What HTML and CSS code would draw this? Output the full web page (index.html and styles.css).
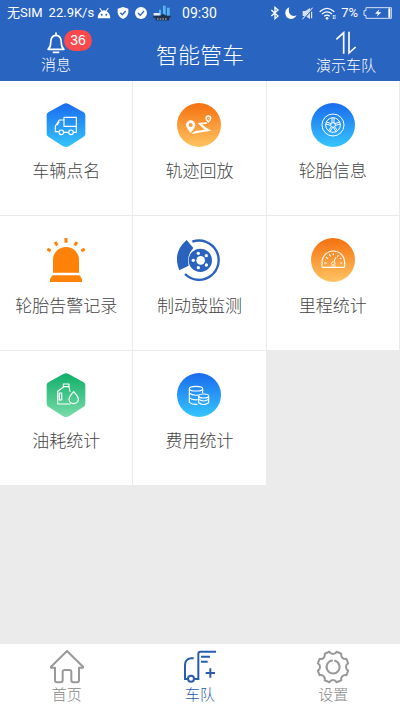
FILE: index.html
```html
<!DOCTYPE html>
<html lang="zh-CN">

<head>
  <meta charset="UTF-8">
  <meta name="viewport" content="width=device-width, initial-scale=1.0">
  <title>智能管车</title>
  <link rel="stylesheet" href="styles.css">
</head>

<body>
  <div class="status">
    <div class="status_left">
      <span>无SIM</span>
      <span>22.9K/s</span>
      <svg class="android" width="14" height="12" viewBox="0 0 42 36">
        <path d="M2 34Q3 19 13 13L7 4L9 2L16 11Q21 9 26 11L33 2L35 4L29 13Q39 19 40 34Z" fill="#fff" />
        <circle cx="14" cy="23" r="3" fill="#2a64c1" /><circle cx="28" cy="23" r="3" fill="#2a64c1" />
      </svg>
      <svg width="12" height="12" viewBox="0 0 36 36">
        <path d="M18 0L34 5V16Q34 29 18 36Q2 29 2 16V5Z" fill="#fff" />
        <path d="M10 17L16 23L26 12" fill="none" stroke="#2a64c1" stroke-width="4" />
      </svg>
      <svg width="12" height="12" viewBox="0 0 36 36">
        <circle cx="18" cy="18" r="18" fill="#fff" />
        <path d="M9 18L16 25L27 12" fill="none" stroke="#2a64c1" stroke-width="4" />
      </svg>
      <svg width="18" height="16" viewBox="0 0 54 48">
        <path d="M18 32V14H24V32M30 32V2H38V32M42 32V8H50V32" fill="#57b4ee" />
        <path d="M2 24H20V32H2Z" fill="#e8edf2" />
        <path d="M1 32H22L30 26L40 32H53V38H1Z" fill="#1f3048" />
        <path d="M8 38H48V46H8Z" fill="#202a3c" />
        <path d="M12 42H44" stroke="#c9d3df" stroke-width="3" stroke-dasharray="5 3" />
      </svg>
    </div>
    <time>09:30</time>
    <div class="status_right">
      <svg width="10" height="14" viewBox="0 0 30 42">
        <path d="M4 12L24 30L15 38V4L24 12L4 30" fill="none" stroke="#fff" stroke-width="4" />
      </svg>
      <svg width="12" height="12" viewBox="0 0 36 36">
        <path d="M13 1Q8 18 19 25Q26 29 35 25Q29 36 17 36Q1 34 1 18Q1 6 13 1Z" fill="#fff" />
      </svg>
      <svg class="mute" width="12" height="13" viewBox="0 0 36 39">
        <path d="M2 12H10L24 3V36L10 27H2Z" fill="#d5e2f5" />
        <path d="M34 2L3 37" stroke="#2a64c1" stroke-width="5" />
        <path d="M32 2L1 37M29 14V34" stroke="#fff" stroke-width="3" />
      </svg>
      <svg width="17" height="13" viewBox="0 0 51 39">
        <path d="M2 14Q24-6 46 14M9 21Q24 8 39 21M16 28Q24 21 32 28" fill="none" stroke="#fff" stroke-width="4" />
        <circle cx="24" cy="34" r="4" fill="#fff" />
        <path d="M43 24V36M48 24V36" stroke="#fff" stroke-width="3" stroke-dasharray="5 2" />
      </svg>
      <span>7%</span>
      <svg width="29" height="12" viewBox="0 0 87 36">
        <path d="M9 2H85V34H9V25H3V11H9Z" fill="none" stroke="#d5e2f5" stroke-width="3" />
        <path d="M79 4V32" stroke="#fff" stroke-width="6" />
        <path d="M49 7L36 20H45L41 29L55 16H46Z" fill="#fff" />
      </svg>
    </div>
  </div>

  <header class="header">
    <button type="button" class="message">
      <span class="bell">
        <svg width="20" height="22" viewBox="0 0 60 66">
          <path d="M6 52Q14 46 14 33Q14 10 30 10Q46 10 46 33Q46 46 54 52Z M30 10V3M22 61H38" fill="none" stroke="#fff" stroke-width="5" stroke-linecap="round" stroke-linejoin="round" />
        </svg>
        <span class="badge">36</span>
      </span>
      消息
    </button>
    <h1>智能管车</h1>
    <button type="button" class="fleet">
      <svg width="22" height="24" viewBox="0 0 66 72">
        <path d="M4 25L26 5V68M42 2V66L62 48" fill="none" stroke="#fff" stroke-width="5" />
      </svg>
      演示车队
    </button>
  </header>

  <main class="menu">
    <svg class="defs" width="0" height="0">
      <defs>
        <linearGradient id="blue" x1="0" y1="0" x2="0" y2="1">
          <stop offset="0" stop-color="#1a6bed" /><stop offset="1" stop-color="#35c5fd" />
        </linearGradient>
        <linearGradient id="orange" x1="0" y1="0" x2="0" y2="1">
          <stop offset="0" stop-color="#f5700f" /><stop offset="1" stop-color="#ffc462" />
        </linearGradient>
        <linearGradient id="green" x1="0" y1="0" x2="0" y2="1">
          <stop offset="0" stop-color="#0fae69" /><stop offset="1" stop-color="#78dca9" />
        </linearGradient>
      </defs>
    </svg>

    <a class="item" href="#">
      <svg class="icon" viewBox="0 0 132 132">
        <path d="M58 3Q66-2 74 3L119 28Q124 31 124 36V92Q124 98 119 101L76 129Q66 135 56 129L13 101Q8 98 8 92V36Q8 31 13 28Z" fill="url(#blue)" />
        <g fill="none" stroke="#fff" stroke-width="3.5" stroke-linejoin="round">
          <path d="M60 43H97V70H60Z M60 51H46L34 69V86H44M60 88H73M89 88H97V70M46 56L39 67" />
          <circle cx="52" cy="88" r="7" /><circle cx="81" cy="88" r="7" />
        </g>
      </svg>
      车辆点名
    </a>
    <a class="item" href="#">
      <svg class="icon" viewBox="0 0 132 132">
        <circle cx="66" cy="66" r="66" fill="url(#orange)" />
        <path d="M41 90Q27 73 27 66A14 14 0 0 1 55 66Q55 73 41 90Z M41 60A6 6 0 1 0 41 72A6 6 0 1 0 41 60Z" fill="#fff" fill-rule="evenodd" />
        <path d="M94 57Q87 50 87 46A7 7 0 0 1 101 46Q101 50 94 57Z" fill="none" stroke="#fff" stroke-width="4" />
        <circle cx="94" cy="46" r="2" fill="#fff" />
        <path d="M42 93L55 84L83 80L62 60L90 58V62L74 64L90 76L103 83Z" fill="#fff" />
      </svg>
      轨迹回放
    </a>
    <a class="item" href="#">
      <svg class="icon" viewBox="0 0 132 132">
        <circle cx="66" cy="66" r="66" fill="url(#blue)" />
        <g fill="none" stroke="#fff" stroke-width="3">
          <circle cx="66" cy="66" r="33" /><circle cx="66" cy="66" r="22" /><circle cx="66" cy="66" r="7" />
          <path d="M63 60V45M69 60V45M71 62L86 57M73 67L88 63M71 71L80 84M67 73L76 87M61 71L52 84M65 73L56 87M61 62L46 57M59 67L44 63" />
        </g>
      </svg>
      轮胎信息
    </a>

    <a class="item" href="#">
      <svg class="icon" viewBox="0 0 132 132">
        <path d="M27 104V65A39 38 0 0 1 105 65V104Z M25 112H107L114 124V132H18V124Z" fill="#fe8108" />
        <path d="M66 0V14M33 12L40 22M99 12L92 22M10 33L20 39M122 33L112 39" stroke="#fe8108" stroke-width="9" />
      </svg>
      轮胎告警记录
    </a>
    <a class="item" href="#">
      <svg class="icon" viewBox="0 0 132 132">
        <path d="M46 11A59 59 0 1 1 24 108" fill="none" stroke="#2a63bd" stroke-width="7" />
        <path d="M29 6L49 30Q28 52 35 83L7 97Q-15 44 29 6Z" fill="#2a63bd" />
        <circle cx="70" cy="67" r="35" fill="#2a63bd" />
        <g fill="#fff">
          <circle cx="71" cy="67" r="13" />
          <circle cx="49" cy="67" r="5" /><circle cx="64" cy="46" r="5" /><circle cx="88" cy="53" r="5" />
          <circle cx="88" cy="81" r="5" /><circle cx="64" cy="89" r="5" />
        </g>
      </svg>
      制动鼓监测
    </a>
    <a class="item" href="#">
      <svg class="icon" viewBox="0 0 132 132">
        <circle cx="66" cy="66" r="66" fill="url(#orange)" />
        <path d="M36 88Q33 88 33 83V74A34 35 0 0 1 101 74V83Q101 88 98 88Z" fill="none" stroke="#fff" stroke-width="3.5" />
        <path d="M40 75H47M94 75H87M45 58L51 62M55 49L59 55M67 46V52M83 51L79 56M91 60L86 63" stroke="#fff" stroke-width="3.5" />
        <path d="M75 57L69 71" stroke="#fff" stroke-width="3" />
        <circle cx="67" cy="76" r="5" fill="none" stroke="#fff" stroke-width="3" />
        <path d="M59 84H75" stroke="#fff" stroke-width="2" />
      </svg>
      里程统计
    </a>

    <a class="item" href="#">
      <svg class="icon" viewBox="0 0 132 132">
        <path d="M58 3Q66-2 74 3L119 28Q124 31 124 36V92Q124 98 119 101L76 129Q66 135 56 129L13 101Q8 98 8 92V36Q8 31 13 28Z" fill="url(#green)" />
        <g fill="none" stroke="#fff" stroke-width="3.5" stroke-linejoin="round">
          <path d="M58 33H75V41H58Z M60 41L41 55V93H80M73 41Q78 45 78 56M46 60H53V81H46Z" />
          <path d="M89 56Q75 71 75 79A14 13 0 0 0 103 79Q103 71 89 56Z" />
        </g>
      </svg>
      油耗统计
    </a>
    <a class="item" href="#">
      <svg class="icon" viewBox="0 0 132 132">
        <circle cx="66" cy="66" r="66" fill="url(#blue)" />
        <g fill="none" stroke="#fff" stroke-width="3.5">
          <ellipse cx="57" cy="47" rx="20" ry="7" />
          <path d="M37 47V88Q45 95 61 94M77 47V60M37 60Q45 69 65 66M37 74Q45 82 62 80" />
          <ellipse cx="80" cy="69" rx="15" ry="6" />
          <path d="M65 69V89Q80 100 95 89V69M65 79Q80 89 95 79" />
        </g>
      </svg>
      费用统计
    </a>
  </main>

  <nav class="tabs">
    <a class="tab" href="#">
      <svg width="34" height="34" viewBox="0 0 102 102">
        <path d="M51 3L99 50V53H87V91Q87 97 81 97H70Q64 97 64 91V66Q64 60 58 60H44Q38 60 38 66V91Q38 97 32 97H21Q15 97 15 91V53H3V50Z" fill="none" stroke="#999" stroke-width="6" stroke-linejoin="round" />
      </svg>
      首页
    </a>
    <a class="tab active" href="#">
      <svg width="34" height="34" viewBox="0 0 102 102">
        <g fill="none" stroke="#2a5caa" stroke-width="6">
          <path d="M32 25H24Q6 27 6 46V87H14M34 87H46V11Q46 5 52 5H99M54 20H81M54 35H74M82 55V83M68 69H96" />
          <circle cx="24" cy="86" r="9" />
        </g>
      </svg>
      车队
    </a>
    <a class="tab" href="#">
      <svg width="34" height="34" viewBox="-17 -17 34 34">
        <g fill="none" stroke="#999" stroke-width="2" stroke-linejoin="round" stroke-linecap="round">
          <path d="M-3.6-15.2A4 4 0 0 0 3.6-15.2L8.3-13.3A4 4 0 0 0 13.3-8.3L15.2-3.6A4 4 0 0 0 15.2 3.6L13.3 8.3A4 4 0 0 0 8.3 13.3L3.6 15.2A4 4 0 0 0-3.6 15.2L-8.3 13.3A4 4 0 0 0-13.3 8.3L-15.2 3.6A4 4 0 0 0-15.2-3.6L-13.3-8.3A4 4 0 0 0-8.3-13.3Z" />
          <path d="M2-6.2A6.5 6.5 0 1 1-1-6.4" />
        </g>
      </svg>
      设置
    </a>
  </nav>
</body>

</html>
```

FILE: styles.css
```css
* {
  box-sizing: border-box;
  margin: 0;
  padding: 0;
}

body {
  min-height: 100vh;

  display: flex;
  flex-direction: column;

  background-color: #ebebeb;
  font-family: "Noto Sans CJK SC", sans-serif;
  font-weight: 300;
}

svg {
  display: block;
  flex: none;
}

a {
  text-decoration: none;
}

button {
  border: none;
  background: none;
  color: inherit;
  font: inherit;
  cursor: pointer;
}

.status {
  height: 26px;
  padding: 0 8px 0 7px;

  display: grid;
  grid-template-columns: 1fr auto 1fr;
  align-items: center;

  background-color: #2a64c1;
  color: white;
  font-family: Roboto, "Noto Sans CJK SC", sans-serif;
  font-size: 13px;
  font-weight: 400;
  line-height: 20px;
  white-space: nowrap;
}

.status time {
  font-size: 14px;
}

.status_left,
.status_right {
  display: flex;
  align-items: center;
  gap: 6px;
}

.status_right {
  justify-content: flex-end;
  gap: 5px;
}

.status_left .android {
  margin-left: -3px;
}

.header {
  height: 55px;
  padding: 0 24px 2px 41px;

  display: grid;
  grid-template-columns: 1fr auto 1fr;
  align-items: center;

  background-color: #2a64c1;
  color: white;
}

.header h1 {
  margin-right: 17px;

  font-size: 22px;
  font-weight: 300;
  line-height: 32px;
}

.message,
.fleet {
  display: flex;
  flex-direction: column;
  align-items: center;

  font-size: 15px;
  line-height: 20px;
}

.message {
  justify-self: start;
}

.fleet {
  justify-self: end;
}

.bell {
  position: relative;
}

.badge {
  min-width: 28px;
  height: 21px;
  padding: 0 5px;

  position: absolute;
  left: 18px;
  top: -2px;

  border-radius: 11px;
  background-color: #fb4a4e;
  font-family: "Liberation Sans", sans-serif;
  font-size: 14px;
  line-height: 21px;
}

.menu {
  flex: 1;

  display: grid;
  grid-template-columns: repeat(3, 1fr);
  align-content: start;
}

.defs {
  position: absolute;
}

.item {
  padding: 22px 0 33px;

  display: flex;
  flex-direction: column;
  align-items: center;
  gap: 11px;

  border-right: 1px solid #ebebeb;
  border-bottom: 1px solid #ebebeb;
  background-color: white;
  color: #444;
  font-size: 17px;
  line-height: 24px;
}

.icon {
  width: 44px;
  height: 44px;
}

.tabs {
  height: 67px;
  padding-top: 6px;

  display: grid;
  grid-template-columns: repeat(3, 1fr);

  background-color: white;
}

.tab {
  display: flex;
  flex-direction: column;
  align-items: center;

  color: #888;
  font-size: 15px;
  line-height: 20px;
}

.tab.active {
  color: #2a5caa;
}
```
